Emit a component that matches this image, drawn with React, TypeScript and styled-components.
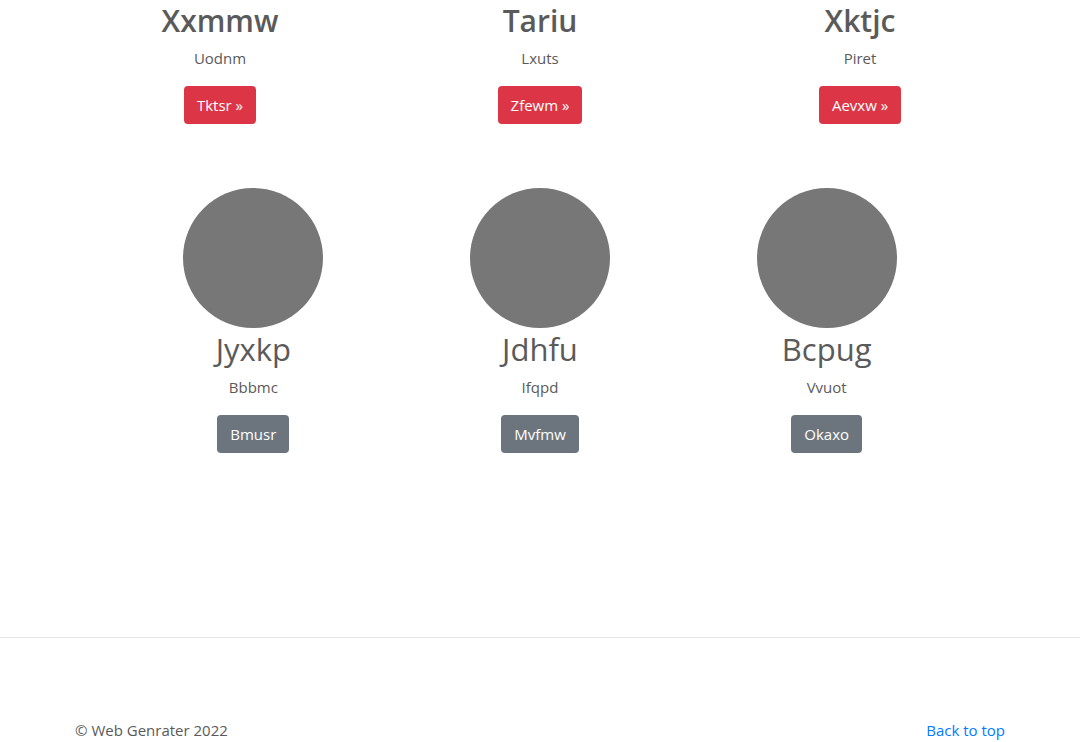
import React from 'react';
import styled, { createGlobalStyle } from 'styled-components';

const GlobalStyle = createGlobalStyle`
  *, *::before, *::after { box-sizing: border-box; }
  body {
    margin: 0;
    background: #fff;
    color: #5a5a5a;
    font-family: "Segoe UI", "Open Sans", "Noto Sans", sans-serif;
    font-size: 15px;
    font-weight: 400;
    line-height: 24px;
  }
`;

const Container = styled.div`
  width: 100%;
  max-width: 960px;
  margin: 0 auto;
`;

const Row = styled.section<{ $inset?: boolean }>`
  display: grid;
  grid-template-columns: repeat(3, 1fr);
  padding: ${({ $inset }) => ($inset ? '0 50px' : '0')};
  margin-bottom: 48px;
`;

const Column = styled.article`
  display: flex;
  flex-direction: column;
  align-items: center;
  padding: 0 15px;
  text-align: center;
`;

const Circle = styled.div`
  width: 140px;
  height: 140px;
  border-radius: 50%;
  background: #777;
`;

const Title = styled.h2<{ $strong?: boolean }>`
  margin: 0 0 8px;
  padding-top: 4px;
  font-size: ${({ $strong }) => ($strong ? '30px' : '31px')};
  font-weight: ${({ $strong }) => ($strong ? 600 : 400)};
  line-height: ${({ $strong }) => ($strong ? '34px' : '35px')};
`;

const Text = styled.p`
  margin: 0 0 16px;
`;

const Button = styled.button<{ $tone: 'danger' | 'secondary' }>`
  height: 38px;
  margin: 0 0 16px;
  padding: 0 12px;
  border: 1px solid transparent;
  border-radius: 4px;
  background: ${({ $tone }) => ($tone === 'danger' ? '#dc3545' : '#6c757d')};
  color: #fff;
  font: inherit;
  cursor: pointer;
`;

const Divider = styled.hr`
  margin: 168px 0 80px;
  border: 0;
  border-top: 1px solid rgba(0, 0, 0, 0.1);
`;

const Footer = styled.footer`
  display: flex;
  justify-content: space-between;
  padding: 0 15px;
`;

const FooterText = styled.p`
  margin: 0;
`;

const TopLink = styled.a`
  color: #007bff;
  text-decoration: none;
`;

const plans = [
  { title: 'Xxmmw', text: 'Uodnm', action: 'Tktsr »' },
  { title: 'Tariu', text: 'Lxuts', action: 'Zfewm »' },
  { title: 'Xktjc', text: 'Piret', action: 'Aevxw »' },
];

const people = [
  { title: 'Jyxkp', text: 'Bbbmc', action: 'Bmusr' },
  { title: 'Jdhfu', text: 'Ifqpd', action: 'Mvfmw' },
  { title: 'Bcpug', text: 'Vvuot', action: 'Okaxo' },
];

export default function App() {
  return (
    <>
      <GlobalStyle />
      <main>
        <Container>
          <Row>
            {plans.map((item) => (
              <Column key={item.title}>
                <Title $strong>{item.title}</Title>
                <Text>{item.text}</Text>
                <Button type="button" $tone="danger">{item.action}</Button>
              </Column>
            ))}
          </Row>
          <Row $inset>
            {people.map((item) => (
              <Column key={item.title}>
                <Circle />
                <Title>{item.title}</Title>
                <Text>{item.text}</Text>
                <Button type="button" $tone="secondary">{item.action}</Button>
              </Column>
            ))}
          </Row>
        </Container>
        <Divider />
      </main>
      <Container>
        <Footer>
          <FooterText>© Web Genrater 2022</FooterText>
          <TopLink href="#">Back to top</TopLink>
        </Footer>
      </Container>
    </>
  );
}
